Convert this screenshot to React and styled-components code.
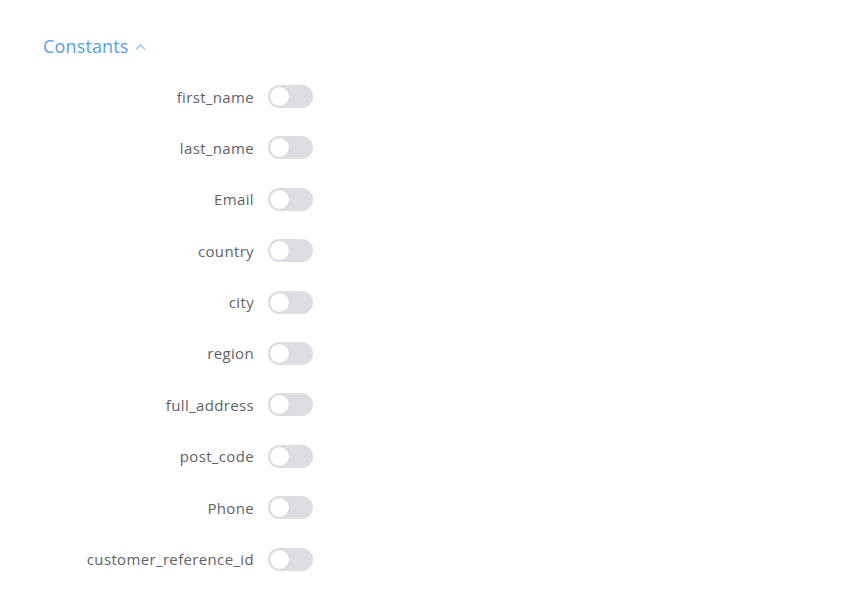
import React from "react";
import styled, { createGlobalStyle } from "styled-components";

const GlobalStyle = createGlobalStyle`
  html, body {
    margin: 0;
    padding: 0;
    background: #ffffff;
    font-family: "Open Sans", "Noto Sans", sans-serif;
  }
`;

const Page = styled.div`
  width: 858px;
  height: 596px;
  padding: 34px 0 0 43px;
  box-sizing: border-box;
`;

//section header
const Header = styled.div`
  display: flex;
  align-items: center;
  gap: 6px;
  height: 24px;
  color: #5a9fe8;
  font-size: 18px;
  letter-spacing: 0.15px;

  svg {
    margin-top: 2px;
  }
`;

const List = styled.div`
  display: flex;
  flex-direction: column;
  gap: 28.4px;
  margin-top: 27px;
`;

const Row = styled.div`
  display: grid;
  grid-template-columns: 211px 45px;
  column-gap: 14px;
  align-items: center;
  height: 23px;

  label {
    text-align: right;
    font-size: 15px;
    letter-spacing: 0.35px;
    color: #5f6266;
    white-space: nowrap;
  }
`;

//switch
const Track = styled.button`
  position: relative;
  width: 45px;
  height: 23px;
  border: none;
  padding: 0;
  border-radius: 12px;
  background-color: ${({ $on }) => ($on ? "#5a9fe8" : "#dcdee3")};
  cursor: pointer;

  &::after {
    content: "";
    position: absolute;
    top: 2px;
    left: ${({ $on }) => ($on ? "24px" : "2px")};
    width: 19px;
    height: 19px;
    border-radius: 50%;
    background: #ffffff;
    box-shadow: 0 0 1px #c0c4cc;
  }
`;

const fields = [
  "first_name",
  "last_name",
  "Email",
  "country",
  "city",
  "region",
  "full_address",
  "post_code",
  "Phone",
  "customer_reference_id",
];

export default function App() {
  return (
    <>
      <GlobalStyle />
      <Page>
        <Header>
          Constants
          <svg width="11" height="8" viewBox="0 0 11 8">
            <path d="M1 6.5 L5.5 2 L10 6.5" fill="none" stroke="#9cc4f0" strokeWidth="1.3" />
          </svg>
        </Header>
        <List>
          {fields.map((f) => (
            <Row key={f}>
              <label>{f}</label>
              <Track $on={false} />
            </Row>
          ))}
        </List>
      </Page>
    </>
  );
}
